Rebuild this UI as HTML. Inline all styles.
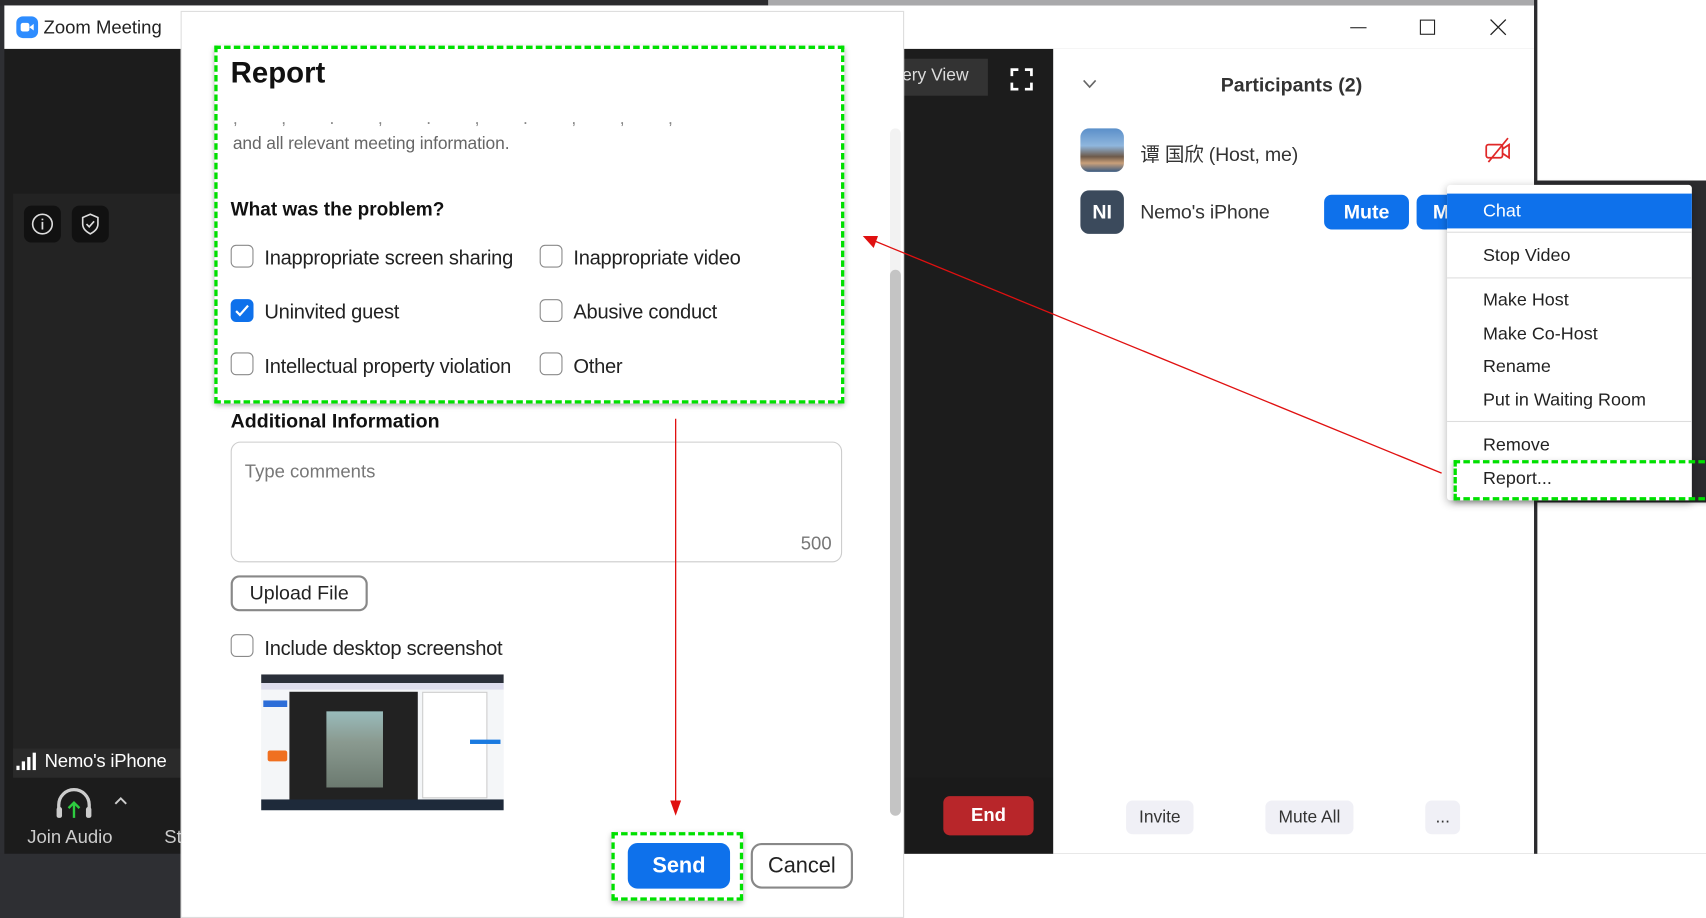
<!DOCTYPE html>
<html><head><meta charset="utf-8">
<style>
*{margin:0;padding:0;box-sizing:border-box}
html,body{width:1706px;height:918px;overflow:hidden;background:#2e2f33}
#w{position:absolute;left:0;top:0;width:1568px;height:844px;transform:scale(1.08801,1.08768);transform-origin:0 0;font-family:"Liberation Sans","Noto Sans CJK SC",sans-serif;}
.a{position:absolute}
.t{position:absolute;white-space:nowrap}
.cb{position:absolute;width:21px;height:21px;border:1.5px solid #8a8a8a;border-radius:5px;background:#fff}
.lbl{position:absolute;white-space:nowrap;font-size:18.5px;color:#222;letter-spacing:-0.25px}
.mi{position:absolute;left:1363px;font-size:16.5px;color:#222;white-space:nowrap}
.sep{position:absolute;left:1330px;width:225px;height:1px;background:#ddd}
.gb{position:absolute;border:3px dashed #00e000;box-shadow:0 2px 5px rgba(0,0,0,.35)}
.pb{position:absolute;background:#f0f0f6;border-radius:6px;font-size:16px;color:#333;text-align:center}
</style></head><body><div id="w">
<div class="a" style="left:0;top:0;width:1568px;height:5px;background:#2b2b2e"></div>
<div class="a" style="left:706px;top:0;width:704px;height:5px;background:#a9a9ab"></div>
<div class="a" style="left:4px;top:5px;width:1406px;height:40px;background:#fff"></div>
<div class="a" style="left:15px;top:15px;width:20px;height:20px;border-radius:6px;background:#2d8cff"></div>
<div class="a" style="left:19px;top:21px;width:8px;height:8px;background:#fff;border-radius:2px"></div>
<div class="a" style="left:27px;top:22px;width:0;height:0;border-top:3px solid transparent;border-bottom:3px solid transparent;border-right:4px solid #fff"></div>
<div class="t" style="left:40px;top:16px;font-size:17px;color:#222">Zoom Meeting</div>
<div class="a" style="left:1241px;top:25px;width:15px;height:1px;background:#222"></div>
<div class="a" style="left:1305px;top:18px;width:14px;height:14px;border:1px solid #222"></div>
<svg class="a" style="left:1369px;top:17px" width="16" height="16"><path d="M1 1L15 15M15 1L1 15" stroke="#222" stroke-width="1.2"/></svg>
<div class="a" style="left:4px;top:45px;width:964px;height:740px;background:#1c1c1c"></div>
<div class="a" style="left:12px;top:178px;width:160px;height:510px;background:#232323"></div>
<div class="a" style="left:22px;top:189px;width:34px;height:34px;border-radius:7px;background:#111"></div>
<svg class="a" style="left:28px;top:195px" width="22" height="22"><circle cx="11" cy="11" r="9" fill="none" stroke="#ddd" stroke-width="1.5"/><path d="M11 9v7M11 6v1.5" stroke="#ddd" stroke-width="1.6"/></svg>
<div class="a" style="left:66px;top:189px;width:34px;height:34px;border-radius:7px;background:#111"></div>
<svg class="a" style="left:72px;top:195px" width="22" height="22"><path d="M11 2L18 5V11C18 15 15 18 11 20C7 18 4 15 4 11V5Z" fill="none" stroke="#ddd" stroke-width="1.5"/><path d="M7.5 11l2.5 2.5 4.5-5" fill="none" stroke="#ddd" stroke-width="1.5"/></svg>
<div class="a" style="left:12px;top:688px;width:160px;height:27px;background:#2a2a2a"></div>
<svg class="a" style="left:15px;top:691px" width="22" height="18"><rect x="0" y="13" width="3" height="4" fill="#fff"/><rect x="5" y="9" width="3" height="8" fill="#fff"/><rect x="10" y="5" width="3" height="12" fill="#fff"/><rect x="15" y="1" width="3" height="16" fill="#fff"/></svg>
<div class="t" style="left:41px;top:690px;font-size:17px;color:#fff;letter-spacing:-0.2px">Nemo's iPhone</div>
<svg class="a" style="left:50px;top:724px" width="36" height="32"><path d="M4 24V16A14 14 0 0 1 32 16V24" fill="none" stroke="#ccc" stroke-width="3"/><rect x="2" y="18" width="5" height="10" rx="2" fill="#ccc"/><rect x="29" y="18" width="5" height="10" rx="2" fill="#ccc"/><path d="M18 28V14M13 19l5-5 5 5" fill="none" stroke="#2ecc40" stroke-width="2.2"/></svg>
<svg class="a" style="left:105px;top:732px" width="12" height="8"><path d="M1 7l5-5 5 5" fill="none" stroke="#ccc" stroke-width="1.8"/></svg>
<div class="t" style="left:25px;top:760px;font-size:17px;color:#ccc">Join Audio</div>
<div class="t" style="left:151px;top:760px;font-size:17px;color:#ccc">St</div>
<div class="a" style="left:830px;top:54px;width:78px;height:34px;background:#333"></div>
<div class="t" style="left:822px;top:61px;font-size:16px;color:#ddd">llery View</div>
<svg class="a" style="left:928px;top:62px" width="22" height="22"><path d="M2 8V2H8M14 2H20V8M20 14V20H14M8 20H2V14" fill="none" stroke="#fff" stroke-width="2.5"/></svg>
<div class="a" style="left:830px;top:715px;width:138px;height:70px;background:#1a1a1a"></div>
<div class="a" style="left:867px;top:732px;width:83px;height:36px;background:#b8262a;border-radius:6px;color:#fff;font-weight:bold;font-size:17px;text-align:center;line-height:36px">End</div>
<div class="a" style="left:968px;top:45px;width:442px;height:740px;background:#fff"></div>
<svg class="a" style="left:995px;top:73px" width="13" height="9"><path d="M1 1l5.5 6 5.5-6" fill="none" stroke="#666" stroke-width="1.5"/></svg>
<div class="t" style="left:1122px;top:68px;font-size:18px;font-weight:bold;color:#333">Participants (2)</div>
<div class="a" style="left:993px;top:118px;width:40px;height:40px;border-radius:8px;background:linear-gradient(180deg,#5b8fc9 0%,#8fb6dd 40%,#6d5a4a 65%,#c9a07a 80%,#3a5a80 100%)"></div>
<div class="t" style="left:1048px;top:128px;font-size:18px;color:#333;letter-spacing:-0.2px">谭 国欣 (Host, me)</div>
<svg class="a" style="left:1364px;top:126px" width="26" height="24"><rect x="2" y="7" width="15" height="12" rx="2" fill="none" stroke="#e02828" stroke-width="1.6"/><path d="M17 11l6-4v12l-6-4" fill="none" stroke="#e02828" stroke-width="1.6"/><path d="M4 23L22 1" stroke="#e02828" stroke-width="1.6"/></svg>
<div class="a" style="left:993px;top:175px;width:40px;height:40px;border-radius:8px;background:#3b4a5c;color:#fff;font-weight:bold;font-size:18px;text-align:center;line-height:40px">NI</div>
<div class="t" style="left:1048px;top:185px;font-size:18px;color:#333;letter-spacing:-0.2px">Nemo's iPhone</div>
<div class="a" style="left:1217px;top:179px;width:78px;height:32px;background:#0e71eb;border-radius:7px;color:#fff;font-weight:bold;font-size:18px;text-align:center;line-height:32px">Mute</div>
<div class="a" style="left:1302px;top:179px;width:40px;height:32px;background:#0e71eb;border-radius:7px;color:#fff;font-weight:bold;font-size:18px;line-height:32px;padding-left:15px">M</div>
<div class="pb" style="left:1035px;top:736px;width:62px;height:31px;line-height:31px">Invite</div>
<div class="pb" style="left:1163px;top:736px;width:81px;height:31px;line-height:31px">Mute All</div>
<div class="pb" style="left:1310px;top:736px;width:32px;height:31px;line-height:31px">...</div>
<div class="a" style="left:1410px;top:0;width:3px;height:785px;background:#2b2b2e"></div>
<div class="a" style="left:1413px;top:0;width:155px;height:166px;background:#fff"></div>
<div class="a" style="left:1413px;top:166px;width:155px;height:296px;background:#2b2b2e"></div>
<div class="a" style="left:1413px;top:462px;width:155px;height:323px;background:#fff"></div>
<div class="a" style="left:830px;top:785px;width:738px;height:59px;background:#fff"></div>
<div class="a" style="left:0;top:785px;width:166px;height:59px;background:#2e2f33"></div>
<div class="a" style="left:1330px;top:170px;width:225px;height:290px;background:#fff;box-shadow:0 2px 8px rgba(0,0,0,.3);border-radius:3px"></div>
<div class="a" style="left:1330px;top:178px;width:225px;height:32px;background:#0e71eb"></div>
<div class="mi" style="top:185px;color:#fff">Chat</div>
<div class="sep" style="top:213px"></div>
<div class="mi" style="top:226px">Stop Video</div>
<div class="sep" style="top:255px"></div>
<div class="mi" style="top:267px">Make Host</div>
<div class="mi" style="top:298px">Make Co-Host</div>
<div class="mi" style="top:328px">Rename</div>
<div class="mi" style="top:359px">Put in Waiting Room</div>
<div class="sep" style="top:387px"></div>
<div class="mi" style="top:400px">Remove</div>
<div class="mi" style="top:431px">Report...</div>
<div class="gb" style="left:1336px;top:423px;width:240px;height:37px;border-right:none"></div>
<div class="a" style="left:166px;top:10px;width:665px;height:834px;background:#fff;border:1px solid #ddd"></div>
<div class="a" style="left:818px;top:118px;width:10px;height:632px;background:#f2f2f2;border-radius:5px"></div>
<div class="a" style="left:818px;top:248px;width:10px;height:502px;background:#c4c4c4;border-radius:5px"></div>
<div class="t" style="left:212px;top:52px;font-size:27px;font-weight:bold;color:#111">Report</div>
<div class="t" style="left:214px;top:108px;font-size:16px;color:#888;height:8px;overflow:hidden;line-height:4px;letter-spacing:40px">,,.,.,.,,,</div>
<div class="t" style="left:214px;top:124px;font-size:16px;color:#666;letter-spacing:-0.1px">and all relevant meeting information.</div>
<div class="t" style="left:212px;top:182px;font-size:17.5px;font-weight:bold;color:#111">What was the problem?</div>
<div class="cb" style="left:212px;top:225px"></div><div class="lbl" style="left:243px;top:226px">Inappropriate screen sharing</div>
<div class="cb" style="left:496px;top:225px"></div><div class="lbl" style="left:527px;top:226px">Inappropriate video</div>
<div class="cb" style="left:212px;top:275px;background:#0e71eb;border-color:#0e71eb"></div>
<svg class="a" style="left:215px;top:279px" width="15" height="13"><path d="M2 7l3.5 3.5L13 2" fill="none" stroke="#fff" stroke-width="2"/></svg>
<div class="lbl" style="left:243px;top:276px">Uninvited guest</div>
<div class="cb" style="left:496px;top:275px"></div><div class="lbl" style="left:527px;top:276px">Abusive conduct</div>
<div class="cb" style="left:212px;top:324px"></div><div class="lbl" style="left:243px;top:326px">Intellectual property violation</div>
<div class="cb" style="left:496px;top:324px"></div><div class="lbl" style="left:527px;top:326px">Other</div>
<div class="gb" style="left:197px;top:42px;width:579px;height:329px"></div>
<div class="t" style="left:212px;top:377px;font-size:18px;font-weight:bold;color:#111">Additional Information</div>
<div class="a" style="left:212px;top:406px;width:562px;height:111px;border:1.5px solid #ccc;border-radius:9px"></div>
<div class="t" style="left:225px;top:424px;font-size:17px;color:#777">Type comments</div>
<div class="t" style="left:736px;top:490px;font-size:17px;color:#777">500</div>
<div class="a" style="left:212px;top:529px;width:126px;height:33px;border:2px solid #888;border-radius:8px;font-size:18px;color:#222;text-align:center;line-height:29px">Upload File</div>
<div class="cb" style="left:212px;top:583px"></div><div class="lbl" style="left:243px;top:585px">Include desktop screenshot</div>
<div class="a" style="left:240px;top:620px;width:223px;height:125px;background:#f4f6f8;overflow:hidden">
 <div class="a" style="left:0;top:0;width:223px;height:8px;background:#2a2f3a"></div>
 <div class="a" style="left:0;top:8px;width:223px;height:6px;background:#dde"></div>
 <div class="a" style="left:26px;top:16px;width:118px;height:102px;background:#222"></div>
 <div class="a" style="left:60px;top:34px;width:52px;height:70px;background:linear-gradient(#9bb 0%,#8a9a90 40%,#6c7a70 100%)"></div>
 <div class="a" style="left:148px;top:16px;width:60px;height:98px;background:#fff;border:1px solid #ccc"></div>
 <div class="a" style="left:0;top:115px;width:223px;height:10px;background:#1e2a3a"></div>
 <div class="a" style="left:6px;top:70px;width:18px;height:10px;background:#f07020;border-radius:2px"></div>
 <div class="a" style="left:192px;top:60px;width:28px;height:4px;background:#1a7ae0"></div>
 <div class="a" style="left:2px;top:24px;width:22px;height:6px;background:#2d6ed8"></div>
</div>
<svg class="a" style="left:0;top:0" width="1568" height="844"><path d="M621 385V738" stroke="#e01010" stroke-width="1.2"/><path d="M616 736L621 750L626 736Z" fill="#e01010"/><path d="M1325 435L800 220" stroke="#e01010" stroke-width="1.2"/><path d="M793 217L807 217L803 228Z" fill="#e01010"/></svg>
<div class="a" style="left:577px;top:775px;width:94px;height:42px;background:#0e71eb;border-radius:9px;color:#fff;font-weight:bold;font-size:20px;text-align:center;line-height:42px">Send</div>
<div class="gb" style="left:562px;top:765px;width:121px;height:63px"></div>
<div class="a" style="left:690px;top:775px;width:94px;height:42px;border:2px solid #888;border-radius:10px;font-size:20px;color:#222;text-align:center;line-height:38px">Cancel</div>
</div></body></html>
